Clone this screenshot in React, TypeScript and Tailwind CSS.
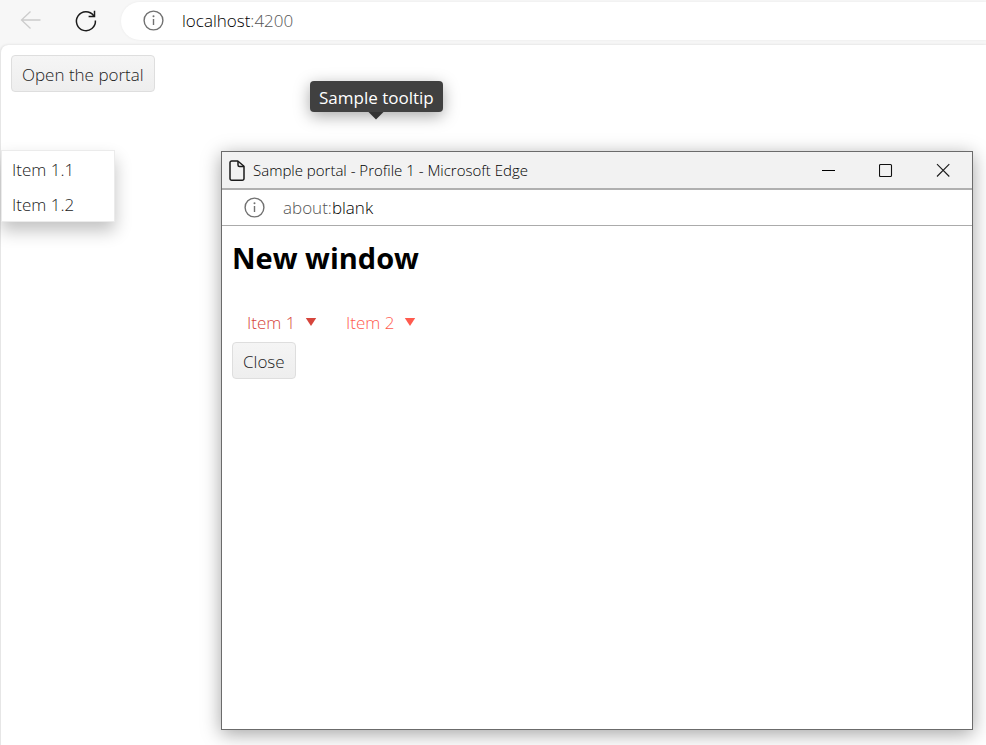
import React from "react";

function InfoIcon() {
  return (
    <svg width="22" height="22" viewBox="0 0 22 22" fill="none" stroke="#717171" strokeWidth="1.4" aria-hidden="true" className="shrink-0">
      <circle cx="11.5" cy="10.5" r="9.4" />
      <path d="M11.5 9v6" />
      <circle cx="11.5" cy="6.2" r="1" fill="#717171" stroke="none" />
    </svg>
  );
}

function Caret() {
  return (
    <svg width="12" height="10" viewBox="0 0 12 10" fill="currentColor" aria-hidden="true">
      <path d="M0.8 0h10.4L6 8z" />
    </svg>
  );
}

function PushButton({ children }: { children: React.ReactNode }) {
  return (
    <button
      type="button"
      className="h-[37px] rounded-[4px] border border-[#dedede] bg-linear-to-b from-[#f5f5f5] to-[#eeeeee] px-[10px] pt-[2px] text-[17px] leading-6 text-[#222222]"
    >
      {children}
    </button>
  );
}

function BrowserBar() {
  return (
    <header className="flex h-[45px] items-start bg-[#f7f7f7] pt-[2px]">
      <button type="button" aria-label="Back" className="ml-5 flex h-[38px] w-6 items-center">
        <svg width="24" height="24" viewBox="0 0 24 24" fill="none" stroke="#cccccc" strokeWidth="1.3">
          <path d="M20.5 11H1.5M10.5 2.5L1.5 11L10.5 19.5" />
        </svg>
      </button>
      <button type="button" aria-label="Reload" className="ml-[30px] flex h-[38px] w-6 items-center">
        <svg width="24" height="24" viewBox="0 0 24 24" fill="none" stroke="#1b1b1b" strokeWidth="1.5">
          <path d="M21.4 11.5A9.5 9.5 0 1 1 19.6 6.6M20.5 1.8V7.4H14.6" />
        </svg>
      </button>
      <div className="ml-[23px] flex h-[38px] flex-1 items-center gap-[18px] rounded-l-full bg-white pl-[21px] shadow-[0_0_3px_rgba(0,0,0,0.06)]">
        <InfoIcon />
        <span className="text-[17px] leading-6 text-black">
          localhost<span className="text-[#555555]">:4200</span>
        </span>
      </div>
    </header>
  );
}

function Tooltip() {
  return (
    <div role="tooltip" className="absolute left-[309px] top-[36px] rounded-[4px] bg-[#404040] px-[9px] pt-[5px] pb-[3px] text-[17px] leading-[23px] font-normal whitespace-nowrap text-white shadow-[0_4px_16px_rgba(0,0,0,0.35)]">
      Sample tooltip
      <svg width="16" height="8" viewBox="0 0 16 8" aria-hidden="true" className="absolute left-1/2 top-full -translate-x-1/2">
        <path d="M0.5 0h15L8 7.5z" fill="#333333" />
      </svg>
    </div>
  );
}

function PopupMenu() {
  return (
    <ul role="menu" className="absolute left-0 top-[105px] w-[114px] border border-[#ebebeb] bg-white text-[17px] text-[#222222] shadow-[0_9px_16px_rgba(0,0,0,0.24)]">
      {["Item 1.1", "Item 1.2"].map((label) => (
        <li key={label} role="menuitem" className="px-[10px] pt-[7px] pb-1 leading-6">
          {label}
        </li>
      ))}
    </ul>
  );
}

function TitleBar() {
  return (
    <div className="flex h-[38px] items-center border-b-2 border-[#b0b0b0] bg-[#f2f2f2] pl-[7px] text-[#1b1b1b]">
      <svg width="16" height="21" viewBox="0 0 16 21" fill="none" stroke="currentColor" strokeWidth="1.5" strokeLinejoin="round" aria-hidden="true">
        <path d="M2.7 1h6.1L15 6.2v12.3a1.7 1.7 0 0 1-1.7 1.7H2.7A1.7 1.7 0 0 1 1 18.5V2.7A1.7 1.7 0 0 1 2.7 1z" />
        <path d="M9 1v4a1.5 1.5 0 0 0 1.5 1.5H15" />
      </svg>
      <span className="ml-2 flex-1 text-[15px] leading-5 text-black">Sample portal - Profile 1 - Microsoft Edge</span>
      <button type="button" aria-label="Minimize" className="flex h-9 w-[57px] items-center justify-center">
        <svg width="14" height="14" viewBox="0 0 14 14" fill="none" stroke="#000000" strokeWidth="1">
          <path d="M0 7.5h13" />
        </svg>
      </button>
      <button type="button" aria-label="Maximize" className="flex h-9 w-[57px] items-center justify-center">
        <svg width="14" height="14" viewBox="0 0 14 14" fill="none" stroke="#111111" strokeWidth="1.1">
          <rect x="0.5" y="1.5" width="12" height="12" rx="1" />
        </svg>
      </button>
      <button type="button" aria-label="Close window" className="flex h-9 w-[58px] items-center justify-center">
        <svg width="14" height="14" viewBox="0 0 14 14" fill="none" stroke="#1b1b1b" strokeWidth="1.1">
          <path d="M1 1.2l12.3 12.3M13.3 1.2L1 13.5" />
        </svg>
      </button>
    </div>
  );
}

function PortalWindow() {
  return (
    <section aria-label="Sample portal" className="absolute bottom-[15px] left-[220px] right-[13px] top-[106px] border border-[#6b6b6b] bg-white shadow-[0_4px_18px_rgba(0,0,0,0.36)]">
      <TitleBar />
      <div className="flex h-9 items-center gap-[18px] border-b border-[#ababab] pl-[21px]">
        <InfoIcon />
        <span className="text-[17px] leading-6 text-[#555555]">
          about:<span className="text-black">blank</span>
        </span>
      </div>
      <div className="px-[10px] pt-[13px]">
        <h1 className="text-[29px] leading-[38px] font-bold text-black">New window</h1>
        <nav className="mt-[27px] flex text-[17px] leading-6">
          <button type="button" className="flex w-[99px] items-center justify-between py-[7px] pr-[14px] pl-[15px] text-[#d6453c]">
            Item 1
            <Caret />
          </button>
          <button type="button" className="flex w-[99px] items-center justify-between py-[7px] pr-[14px] pl-[15px] text-[#ff5a4e]">
            Item 2
            <Caret />
          </button>
        </nav>
        <PushButton>Close</PushButton>
      </div>
    </section>
  );
}

export default function App() {
  return (
    <div className="flex min-h-screen flex-col overflow-hidden bg-[#f7f7f7] font-['Open_Sans','Noto_Sans',sans-serif] font-light">
      <BrowserBar />
      <main className="relative flex-1 rounded-tl-[8px] border-l border-[#e6e6e6] bg-white px-[10px] pt-[10px] shadow-[0_0_3px_rgba(0,0,0,0.12)]">
        <PushButton>Open the portal</PushButton>
        <Tooltip />
        <PopupMenu />
        <PortalWindow />
      </main>
    </div>
  );
}
